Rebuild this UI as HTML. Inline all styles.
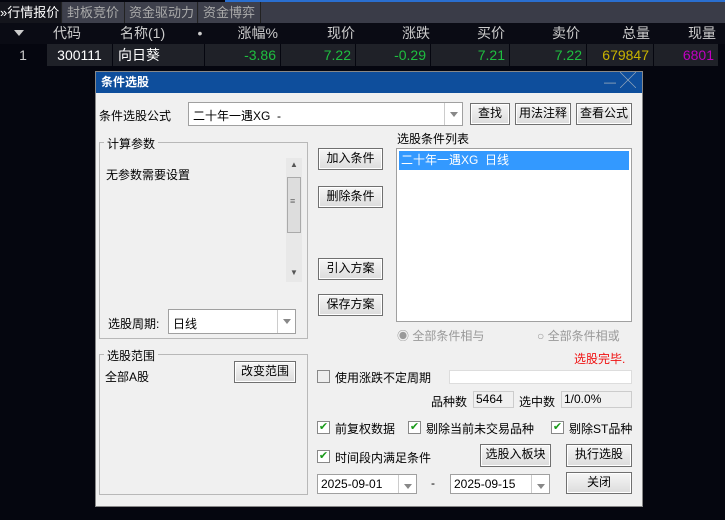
<!DOCTYPE html>
<html><head><meta charset="utf-8"><style>
*{margin:0;padding:0;box-sizing:border-box}
body{width:725px;height:520px;background:#05060f;font-family:"Liberation Sans","Noto Sans CJK SC",sans-serif;font-size:12px;position:relative;overflow:hidden}
.a{position:absolute}
.tab{position:absolute;top:2px;height:21px;color:#aaa;font-size:13px;line-height:21px;padding-left:4px;border-right:1px solid #222}
.hd{position:absolute;top:23px;height:20px;color:#ccc;font-size:14px;line-height:20px;text-align:right}
.cell{position:absolute;top:44px;height:22px;background:#1f2128;font-size:14px;line-height:22px;text-align:right;padding-right:4px}
.btn{position:absolute;background:linear-gradient(#f6f6f6,#dcdcdc);border:1px solid #707070;text-align:center;line-height:19px;color:#000;font-size:12px;box-shadow:inset 0 0 0 1px #fff}
.inp{position:absolute;background:#fff;border:1px solid #a0a0a0}
.dd{position:absolute;top:0;right:0;width:18px;height:100%;border-left:1px solid #ccc}
.dd:after{content:"";position:absolute;left:5px;top:9px;border:4px solid transparent;border-top:5px solid #888}
.t{position:absolute;color:#000;white-space:nowrap}
.cb{position:absolute;width:13px;height:13px;border:1px solid #888;background:#fff;color:#1a9a1a;font-size:11px;line-height:11px;text-align:center}
.grp{position:absolute;border:1px solid #b8b8b8}
</style></head><body>
<div class="a" style="left:225px;top:0;width:500px;height:2px;background:#2a6fd0"></div>
<div class="a" style="left:0;top:2px;width:725px;height:21px;background:#3a3c48"></div>
<div class="tab" style="left:0;width:62px;background:#14151c;color:#fff;padding-left:0">»行情报价</div>
<div class="tab" style="left:63px;width:62px;background:#3e404c">封板竞价</div>
<div class="tab" style="left:125px;width:73px;background:#3e404c">资金驱动力</div>
<div class="tab" style="left:199px;width:62px;background:#3e404c">资金博弈</div>
<div class="a" style="left:0;top:23px;width:725px;height:21px;background:#0a0b14"></div>
<div class="a" style="left:14px;top:30px;border:5px solid transparent;border-top:6px solid #ccc"></div>
<div class="hd" style="left:53px;width:40px;text-align:left">代码</div>
<div class="hd" style="left:120px;width:80px;text-align:left">名称(1)</div>
<div class="hd" style="left:194px;width:12px;text-align:center">•</div>
<div class="hd" style="left:200px;width:78px">涨幅%</div>
<div class="hd" style="left:280px;width:75px">现价</div>
<div class="hd" style="left:355px;width:75px">涨跌</div>
<div class="hd" style="left:430px;width:75px">买价</div>
<div class="hd" style="left:505px;width:75px">卖价</div>
<div class="hd" style="left:580px;width:70px">总量</div>
<div class="hd" style="left:650px;width:66px">现量</div>
<div class="a" style="left:0;top:44px;width:46px;height:22px;color:#ccc;font-size:14px;line-height:22px;text-align:center">1</div>
<div class="cell" style="left:47px;width:65px;color:#fff;text-align:center;padding:0">300111</div>
<div class="cell" style="left:113px;width:91px;color:#fff;text-align:left;padding-left:5px">向日葵</div>
<div class="cell" style="left:205px;width:75px;color:#1fbf3f">-3.86</div>
<div class="cell" style="left:281px;width:74px;color:#1fbf3f">7.22</div>
<div class="cell" style="left:356px;width:74px;color:#1fbf3f">-0.29</div>
<div class="cell" style="left:431px;width:78px;color:#1fbf3f">7.21</div>
<div class="cell" style="left:510px;width:76px;color:#1fbf3f">7.22</div>
<div class="cell" style="left:587px;width:66px;color:#c8b400">679847</div>
<div class="cell" style="left:654px;width:64px;color:#c000c0">6801</div>

<div class="a" style="left:95px;top:71px;width:548px;height:436px;background:#f0f0f0;border:1px solid #888">
<div class="a" style="left:0;top:0;width:546px;height:21px;background:#0e4e9c;color:#fff;font-weight:bold;line-height:21px;padding-left:5px">条件选股
<span class="a" style="right:26px;top:0;font-weight:normal;color:#9ab">—</span><span class="a" style="right:6px;top:-1px;font-weight:normal;font-size:16px;color:#9ab">╳</span></div>
</div>
<div class="t" style="left:99px;top:107px">条件选股公式</div>
<div class="inp" style="left:188px;top:102px;width:275px;height:24px"><span class="t" style="left:4px;top:4px">二十年一遇XG&nbsp; -</span><div class="dd"></div></div>
<div class="btn" style="left:470px;top:103px;width:40px;height:22px">查找</div>
<div class="btn" style="left:515px;top:103px;width:56px;height:22px">用法注释</div>
<div class="btn" style="left:576px;top:103px;width:56px;height:22px">查看公式</div>

<div class="grp" style="left:99px;top:142px;width:209px;height:197px"></div>
<div class="t" style="left:104px;top:135px;background:#f0f0f0;padding:0 3px">计算参数</div>
<div class="t" style="left:106px;top:166px">无参数需要设置</div>
<div class="a" style="left:286px;top:158px;width:16px;height:124px;background:#e8e8e8"></div>
<div class="a" style="left:287px;top:177px;width:14px;height:56px;background:#ddd;border:1px solid #aaa"></div>
<div class="t" style="left:290px;top:196px;font-size:9px;color:#666">≡</div>
<div class="t" style="left:290px;top:160px;font-size:8px;color:#555">▲</div>
<div class="t" style="left:290px;top:268px;font-size:8px;color:#555">▼</div>
<div class="t" style="left:108px;top:315px">选股周期:</div>
<div class="inp" style="left:168px;top:309px;width:128px;height:25px"><span class="t" style="left:4px;top:5px">日线</span><div class="dd"></div></div>

<div class="btn" style="left:318px;top:148px;width:65px;height:22px">加入条件</div>
<div class="btn" style="left:318px;top:186px;width:65px;height:22px">删除条件</div>
<div class="btn" style="left:318px;top:258px;width:65px;height:22px">引入方案</div>
<div class="btn" style="left:318px;top:294px;width:65px;height:22px">保存方案</div>

<div class="t" style="left:397px;top:130px">选股条件列表</div>
<div class="inp" style="left:396px;top:148px;width:236px;height:174px"><div class="a" style="left:2px;top:2px;width:230px;height:19px;background:#3399ff;color:#fff;line-height:19px;padding-left:2px">二十年一遇XG&nbsp; 日线</div></div>
<div class="t" style="left:397px;top:327px;color:#999">◉ 全部条件相与</div>
<div class="t" style="left:537px;top:327px;color:#999">○ 全部条件相或</div>

<div class="grp" style="left:99px;top:354px;width:209px;height:141px"></div>
<div class="t" style="left:104px;top:347px;background:#f0f0f0;padding:0 3px">选股范围</div>
<div class="t" style="left:105px;top:368px">全部A股</div>
<div class="btn" style="left:234px;top:361px;width:62px;height:22px">改变范围</div>

<div class="t" style="left:574px;top:350px;color:#f01010">选股完毕.</div>
<div class="cb" style="left:317px;top:370px;background:#eee"></div>
<div class="t" style="left:335px;top:369px">使用涨跌不定周期</div>
<div class="inp" style="left:449px;top:370px;width:183px;height:14px;border-color:#ddd"></div>
<div class="t" style="left:431px;top:393px">品种数</div>
<div class="a" style="left:473px;top:391px;width:41px;height:17px;border:1px solid #ccc;line-height:15px;padding-left:2px">5464</div>
<div class="t" style="left:519px;top:393px">选中数</div>
<div class="a" style="left:561px;top:391px;width:71px;height:17px;border:1px solid #ccc;line-height:15px;padding-left:2px">1/0.0%</div>
<div class="cb" style="left:317px;top:421px">✔</div><div class="t" style="left:335px;top:420px">前复权数据</div>
<div class="cb" style="left:408px;top:421px">✔</div><div class="t" style="left:426px;top:420px">剔除当前未交易品种</div>
<div class="cb" style="left:551px;top:421px">✔</div><div class="t" style="left:569px;top:420px">剔除ST品种</div>
<div class="cb" style="left:317px;top:450px">✔</div><div class="t" style="left:335px;top:449px">时间段内满足条件</div>
<div class="btn" style="left:480px;top:444px;width:71px;height:23px">选股入板块</div>
<div class="btn" style="left:566px;top:444px;width:66px;height:23px">执行选股</div>
<div class="inp" style="left:317px;top:474px;width:100px;height:20px"><span class="t" style="left:3px;top:2px">2025-09-01</span><div class="dd"></div></div>
<div class="t" style="left:431px;top:476px">-</div>
<div class="inp" style="left:450px;top:474px;width:100px;height:20px"><span class="t" style="left:3px;top:2px">2025-09-15</span><div class="dd"></div></div>
<div class="btn" style="left:566px;top:472px;width:66px;height:22px">关闭</div>
</body></html>
